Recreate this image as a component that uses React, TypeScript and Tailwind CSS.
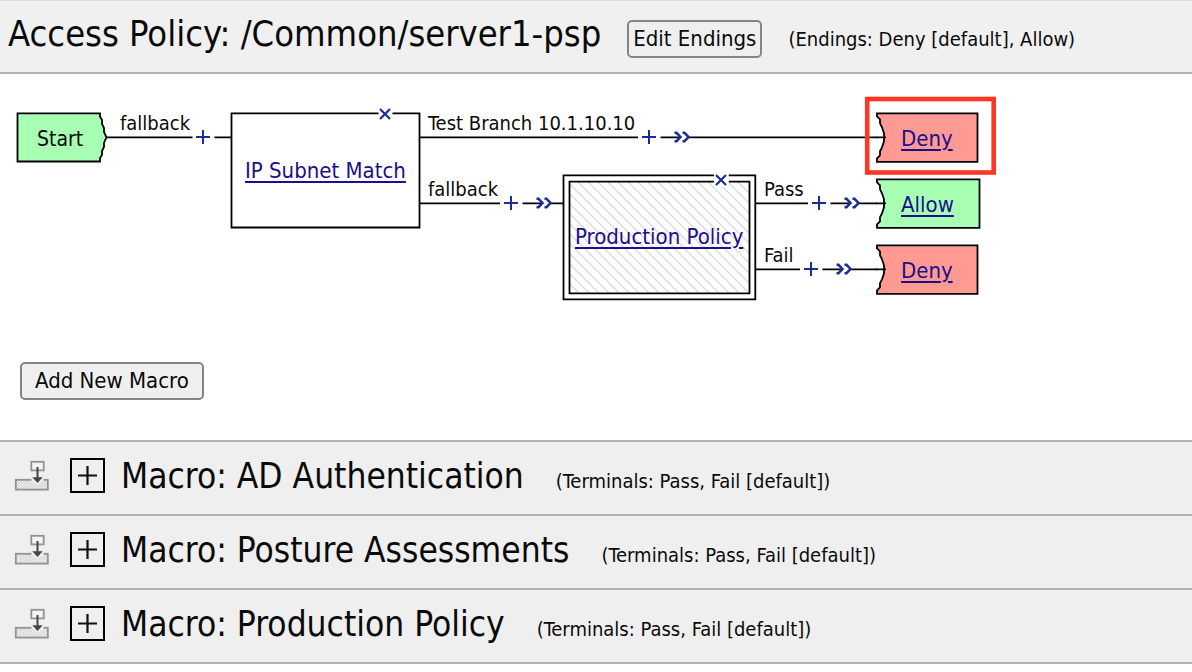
import type { ReactNode } from "react";

const STROKE = 1.8;
const BLUE = "#1c2b98";

type Point = { x: number; y: number };

function CanvasButton({ x, y, label, children }: Point & { label: string; children: ReactNode }) {
  return (
    <button
      type="button"
      aria-label={label}
      className="absolute flex h-4 w-5 -translate-x-1/2 -translate-y-1/2 cursor-pointer items-center justify-center"
      style={{ left: x, top: y }}
    >
      {children}
    </button>
  );
}

function AddItem(p: Point) {
  return (
    <CanvasButton {...p} label="Add item">
      <svg width="16" height="16" viewBox="-8 -8 16 16" stroke={BLUE} strokeWidth="2" fill="none">
        <path d="M-7 0H7M0 -7V7" />
      </svg>
    </CanvasButton>
  );
}

function SwapBranch(p: Point) {
  return (
    <CanvasButton {...p} label="Swap branch">
      <svg width="18" height="12" viewBox="-9 -6 18 12" stroke={BLUE} strokeWidth="2.5" fill="none">
        <path d="M-7.5 -4.2H-5.5L-1.5 0L-5.5 4.2H-7.5M0.5 -4.2H2.5L6.5 0L2.5 4.2H0.5" />
      </svg>
    </CanvasButton>
  );
}

function RemoveItem(p: Point) {
  return (
    <CanvasButton {...p} label="Remove item">
      <svg width="12" height="12" viewBox="-6 -6 12 12" stroke={BLUE} strokeWidth="2.2" fill="none">
        <path d="M-5 -5L5 5M5 -5L-5 5" />
      </svg>
    </CanvasButton>
  );
}

function BranchLabel({ x, y, children }: Point & { children: ReactNode }) {
  return (
    <span className="absolute text-[20px] leading-6 whitespace-nowrap" style={{ left: x, top: y }}>
      {children}
    </span>
  );
}

function NodeLink({ x, y, children }: Point & { children: ReactNode }) {
  return (
    <a
      href="#"
      className="absolute text-[22px] leading-6 whitespace-nowrap text-[#1a0f8c] underline decoration-2 underline-offset-3"
      style={{ left: x, top: y }}
    >
      {children}
    </a>
  );
}

function Ending({ y, right, fill }: { y: number; right: number; fill: string }) {
  return (
    <path
      d={`M877 ${y}H${right}V${y + 48.5}H877V${y + 45}L880 ${y + 42}V${y + 38}L882 ${y + 34}L884 ${y + 28}V${y + 20}L882 ${y + 14}L880 ${y + 10}V${y + 6}L877 ${y + 3}Z`}
      fill={fill}
    />
  );
}

function PolicyDiagram() {
  return (
    <div className="relative h-[288px] w-[1000px] shrink-0">
      <svg width="1000" height="240" className="absolute top-0 left-0" fill="none" stroke="#000" strokeWidth={STROKE}>
        <defs>
          <pattern id="hatch" width="10" height="10" patternUnits="userSpaceOnUse">
            <path d="M-1 -1L11 11M-1 9L1 11M9 -1L11 1" stroke="#d9d9d9" strokeWidth="1.3" />
          </pattern>
        </defs>
        <path d="M17.5 39.3H100V42.5L102 46V50L104 54V58L106.5 63.3L104 69V73L102 77V81L100 84V87.5H17.5Z" fill="#a8ffb3" />
        <path d="M107 63.3H192.5M214.5 63.3H231" />
        <path d="M378.5 39.3H231.5V153.5H419.5V39.3H392.5" />
        <path d="M420 63.3H638M660.5 63.3H680M687 63.3H877" />
        <path d="M420 129.3H500M522.5 129.3H542M549 129.3H563" />
        <rect x="569.5" y="107.5" width="180" height="112" fill="url(#hatch)" stroke="none" />
        <path d="M714 101.3H563.5V225.3H755.3V101.3H728.5" />
        <path d="M714 107.7H569.5V219.3H749.5V107.7H728.5" />
        <rect x="714" y="99" width="14.5" height="14" fill="#fff" stroke="none" />
        <path d="M756 129.3H808M830.5 129.3H850M857 129.3H877" />
        <path d="M756 195.3H800M822.5 195.3H842M849 195.3H877" />
        <Ending y={39.3} right={977.5} fill="#ff9a92" />
        <Ending y={105.3} right={979.5} fill="#a8ffb3" />
        <Ending y={171.3} right={977.5} fill="#ff9a92" />
        <path d="M876 63.3H886M876 129.3H886M876 195.3H886" />
        <rect x="867.2" y="25" width="126.5" height="73.5" stroke="#ff3624" strokeWidth="4.6" />
      </svg>

      <span className="absolute top-[53px] left-[37px] text-[21px] leading-6">Start</span>
      <BranchLabel x={120} y={37}>fallback</BranchLabel>
      <BranchLabel x={428} y={37}>Test Branch 10.1.10.10</BranchLabel>
      <BranchLabel x={428} y={103}>fallback</BranchLabel>
      <BranchLabel x={764} y={103}>Pass</BranchLabel>
      <BranchLabel x={764} y={169}>Fail</BranchLabel>

      <NodeLink x={245} y={85}>IP Subnet Match</NodeLink>
      <NodeLink x={575} y={151}>Production Policy</NodeLink>
      <NodeLink x={901} y={53}>Deny</NodeLink>
      <NodeLink x={901} y={119}>Allow</NodeLink>
      <NodeLink x={901} y={185}>Deny</NodeLink>

      <RemoveItem x={385} y={40} />
      <RemoveItem x={721} y={106} />
      <AddItem x={203} y={63} />
      <AddItem x={649} y={63} />
      <SwapBranch x={682} y={63} />
      <AddItem x={511} y={129} />
      <SwapBranch x={544} y={129} />
      <AddItem x={819} y={129} />
      <SwapBranch x={852} y={129} />
      <AddItem x={811} y={195} />
      <SwapBranch x={844} y={195} />
    </div>
  );
}

function InsertIcon() {
  return (
    <svg width="35" height="31" viewBox="0 0 35 31" fill="none" className="shrink-0" aria-hidden="true">
      <defs>
        <pattern id="dots" width="3" height="3" patternUnits="userSpaceOnUse">
          <path d="M0 0h1.5v1.5h-1.5zM1.5 1.5h1.5v1.5h-1.5z" fill="#d4d4d4" />
        </pattern>
      </defs>
      <rect x="1.8" y="19.8" width="32" height="9.8" fill="url(#dots)" stroke="#929292" strokeWidth="1.8" />
      <path d="M17.5 17.5H29.5V20.8L23.5 25L17.5 20.8Z" fill="#efefef" />
      <rect x="17.3" y="1.8" width="12.4" height="8.6" fill="#f4f4f4" stroke="#929292" strokeWidth="1.8" />
      <path d="M23.5 7V19" stroke="#444" strokeWidth="2" />
      <path d="M18.3 17.3H28.7L23.5 23Z" fill="#444" />
    </svg>
  );
}

function MacroRow({ name }: { name: string }) {
  return (
    <section className="flex h-[74px] items-start border-t-2 border-[#b1b1b1] bg-[#efefef] pl-[14px]">
      <div className="flex pt-[18px]">
        <InsertIcon />
      </div>
      <button
        type="button"
        aria-label={`Expand ${name}`}
        className="mt-4 ml-[21px] flex size-[35px] shrink-0 items-center justify-center border-2 border-black"
      >
        <svg width="19" height="19" viewBox="0 0 19 19" stroke="#111" strokeWidth="2.2" aria-hidden="true">
          <path d="M0 9.5H19M9.5 0V19" />
        </svg>
      </button>
      <div className="flex items-baseline gap-8 pt-[14px] pl-4 whitespace-nowrap">
        <h2 className="text-[35px] leading-10">Macro: {name}</h2>
        <span className="text-[20px] leading-6">(Terminals: Pass, Fail [default])</span>
      </div>
    </section>
  );
}

const MACROS = ["AD Authentication", "Posture Assessments", "Production Policy"];

export default function App() {
  return (
    <main className="min-h-screen bg-white font-['DejaVu_Sans_Condensed','Noto_Sans',sans-serif] text-[#0a0a0a]">
      <header className="flex h-[74px] items-baseline border-t border-b-2 border-t-[#dadada] border-b-[#b1b1b1] bg-[#f0f0f0] pt-[13px] pl-2 whitespace-nowrap">
        <h1 className="text-[36px] leading-10">Access Policy: /Common/server1-psp</h1>
        <button
          type="button"
          className="ml-[26px] h-[38px] rounded-[5px] border-2 border-[#858585] bg-[#efefef] px-1 text-[22px] leading-6"
        >
          Edit Endings
        </button>
        <span className="ml-[26px] text-[20px] leading-6">(Endings: Deny [default], Allow)</span>
      </header>

      <div className="overflow-x-auto overflow-y-hidden">
        <PolicyDiagram />
      </div>
      <div className="pb-10 pl-5">
        <button
          type="button"
          className="block h-[38px] rounded-[5px] border-2 border-[#858585] bg-[#efefef] px-[13px] text-[22px] leading-6"
        >
          Add New Macro
        </button>
      </div>

      <div className="border-b-2 border-[#b1b1b1]">
        {MACROS.map((name) => (
          <MacroRow key={name} name={name} />
        ))}
      </div>
    </main>
  );
}
